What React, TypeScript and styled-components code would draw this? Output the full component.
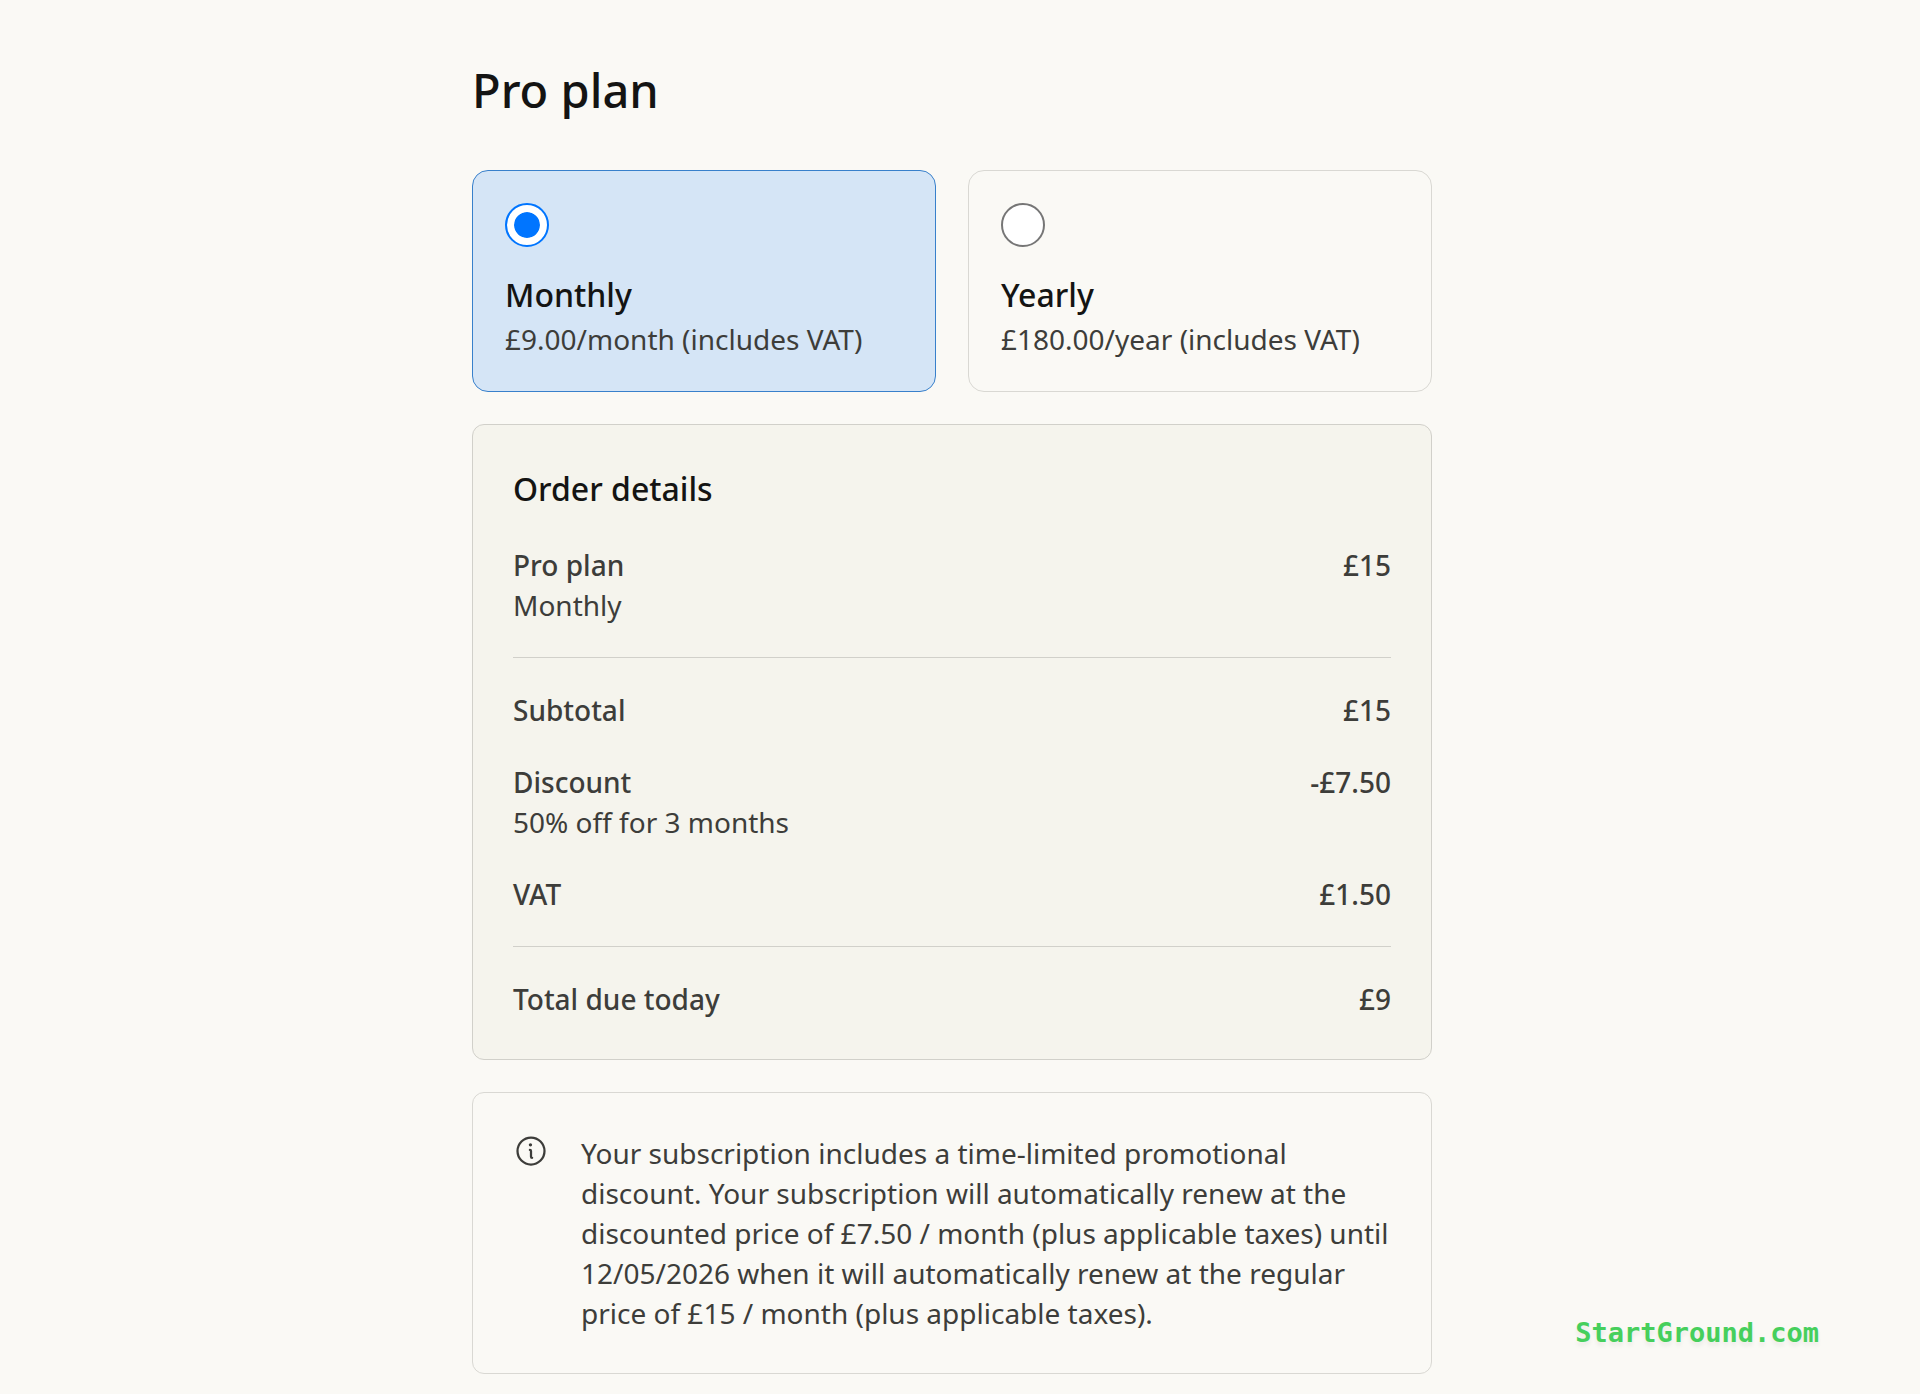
import React, { useState } from "react";
import styled, { createGlobalStyle } from "styled-components";
import { PiInfo } from "react-icons/pi";

const color = {
  page: "#faf9f5",
  panel: "#f5f4ed",
  line: "#d9d8d3",
  panelLine: "#d1d0ca",
  ink: "#141413",
  text: "#3d3d3a",
  selected: "#d5e5f6",
  selectedLine: "#3880cb",
  radio: "#0075ff",
  brand: "#46cf5c",
};

const GlobalStyle = createGlobalStyle`
  *, *::before, *::after { box-sizing: border-box; }
  body {
    margin: 0;
    background: ${color.page};
    color: ${color.text};
    font-family: "Noto Sans", "Open Sans", sans-serif;
    font-size: 28px;
    line-height: 40px;
  }
`;

const Page = styled.div`
  display: flex;
  justify-content: center;
  padding: 60px 32px 20px 16px;
`;

const Checkout = styled.main`
  display: flex;
  flex-direction: column;
  flex: 1;
  gap: 32px;
  max-width: 960px;
`;

const Title = styled.h1`
  margin: 0 0 18px;
  color: ${color.ink};
  font-size: 47px;
  font-weight: 500;
  line-height: 60px;
`;

const Plans = styled.fieldset`
  display: grid;
  grid-template-columns: repeat(auto-fit, minmax(400px, 1fr));
  gap: 32px;
  min-width: 0;
  margin: 0;
  padding: 0;
  border: 0;
`;

const PlanCard = styled.label<{ $selected: boolean }>`
  display: flex;
  flex-direction: column;
  gap: 4px;
  padding: 32px;
  border: 1px solid ${(p) => (p.$selected ? color.selectedLine : color.line)};
  border-radius: 16px;
  background: ${(p) => (p.$selected ? color.selected : "transparent")};
  cursor: pointer;
`;

const Radio = styled.input`
  appearance: none;
  width: 44px;
  height: 44px;
  margin: 0 0 24px;
  padding: 7px;
  border: 2px solid #767676;
  border-radius: 50%;
  background: #ffffff;

  &:checked {
    border-color: ${color.radio};
    background: ${color.radio} content-box;
    box-shadow: inset 0 0 0 7px #ffffff;
  }
`;

const PlanName = styled.span`
  color: ${color.ink};
  font-size: 32px;
  font-weight: 500;
`;

const PlanPrice = styled.span``;

const OrderPanel = styled.section`
  display: flex;
  flex-direction: column;
  gap: 32px;
  padding: 40px;
  border: 1px solid ${color.panelLine};
  border-radius: 12px;
  background: ${color.panel};
`;

const PanelTitle = styled.h2`
  margin: 0;
  color: ${color.ink};
  font-size: 32px;
  font-weight: 500;
  line-height: 48px;
`;

const OrderGroup = styled.dl`
  display: flex;
  flex-direction: column;
  gap: 32px;
  margin: 0;

  & + & {
    padding-top: 32px;
    border-top: 1px solid ${color.panelLine};
  }
`;

const OrderRow = styled.div`
  display: flex;
  justify-content: space-between;
  gap: 32px;
  font-weight: 500;
`;

const RowLabel = styled.dt``;

const RowNote = styled.div`
  font-weight: 400;
`;

const RowAmount = styled.dd`
  margin: 0;
  white-space: nowrap;
`;

const Notice = styled.aside`
  display: flex;
  gap: 32px;
  padding: 40px;
  border: 1px solid ${color.line};
  border-radius: 12px;
`;

const NoticeIcon = styled(PiInfo)`
  flex: none;
  width: 36px;
  height: 36px;
`;

const NoticeText = styled.p`
  flex: 1;
  margin: 0;
`;

const Watermark = styled.div`
  position: absolute;
  right: 101px;
  top: 1313px;
  color: ${color.brand};
  font-family: "DejaVu Sans Mono", monospace;
  font-size: 27px;
  font-weight: 700;
  text-shadow: 0 4px 4px rgba(0, 0, 0, 0.06);
`;

const plans = [
  { id: "monthly", name: "Monthly", price: "£9.00/month (includes VAT)" },
  { id: "yearly", name: "Yearly", price: "£180.00/year (includes VAT)" },
];

type Line = { label: string; note?: string; amount: string };

const order: Line[][] = [
  [{ label: "Pro plan", note: "Monthly", amount: "£15" }],
  [
    { label: "Subtotal", amount: "£15" },
    { label: "Discount", note: "50% off for 3 months", amount: "-£7.50" },
    { label: "VAT", amount: "£1.50" },
  ],
  [{ label: "Total due today", amount: "£9" }],
];

export default function App() {
  const [selected, setSelected] = useState("monthly");

  return (
    <>
      <GlobalStyle />
      <Page>
        <Checkout>
          <Title>Pro plan</Title>
          <Plans aria-label="Billing period">
            {plans.map((plan) => (
              <PlanCard key={plan.id} htmlFor={plan.id} $selected={plan.id === selected}>
                <Radio
                  type="radio"
                  name="billing"
                  id={plan.id}
                  value={plan.id}
                  checked={plan.id === selected}
                  onChange={() => setSelected(plan.id)}
                />
                <PlanName>{plan.name}</PlanName>
                <PlanPrice>{plan.price}</PlanPrice>
              </PlanCard>
            ))}
          </Plans>

          <OrderPanel>
            <PanelTitle>Order details</PanelTitle>
            {order.map((group) => (
              <OrderGroup key={group[0].label}>
                {group.map((line) => (
                  <OrderRow key={line.label}>
                    <RowLabel>
                      {line.label}
                      {line.note && <RowNote>{line.note}</RowNote>}
                    </RowLabel>
                    <RowAmount>{line.amount}</RowAmount>
                  </OrderRow>
                ))}
              </OrderGroup>
            ))}
          </OrderPanel>

          <Notice>
            <NoticeIcon aria-hidden />
            <NoticeText>
              Your subscription includes a time-limited promotional discount. Your subscription
              will automatically renew at the discounted price of £7.50 / month (plus applicable
              taxes) until 12/05/2026 when it will automatically renew at the regular price of
              £15 / month (plus applicable taxes).
            </NoticeText>
          </Notice>
        </Checkout>
      </Page>
      <Watermark>StartGround.com</Watermark>
    </>
  );
}
